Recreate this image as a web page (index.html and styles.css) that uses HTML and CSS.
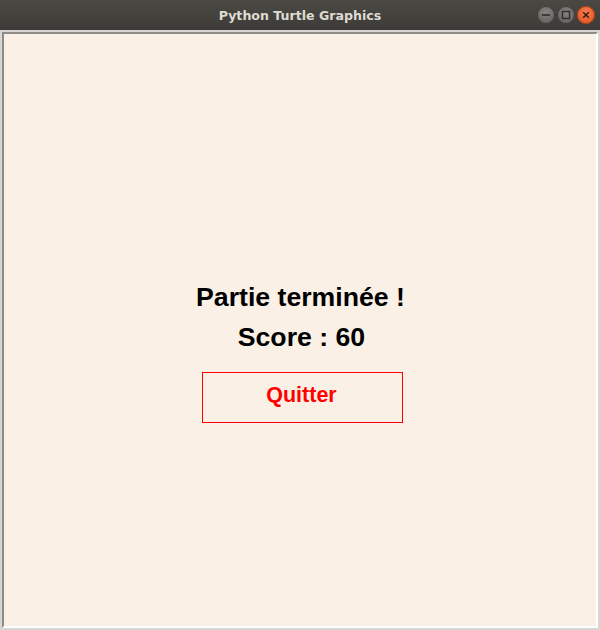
FILE: index.html
```html
<!DOCTYPE html>
<html lang="fr">
<head>
<meta charset="utf-8">
<title>Python Turtle Graphics</title>
<link rel="stylesheet" href="styles.css">
</head>
<body>
<div class="window">
  <header class="titlebar">
    <span class="title">Python Turtle Graphics</span>
    <div class="controls">
      <span class="ctl ctl-min"><svg width="18" height="18" viewBox="0 0 18 18"><line x1="5" y1="9" x2="13" y2="9" stroke="#2f2e2b" stroke-width="1.6"/></svg></span>
      <span class="ctl ctl-max"><svg width="18" height="18" viewBox="0 0 18 18"><rect x="5.5" y="5.5" width="7" height="7" fill="none" stroke="#2f2e2b" stroke-width="1.4"/></svg></span>
      <span class="ctl ctl-close"><svg width="18" height="18" viewBox="0 0 18 18"><path d="M6.2 6.2 L11.8 11.8 M11.8 6.2 L6.2 11.8" stroke="#3a1a0c" stroke-width="1.5"/></svg></span>
    </div>
  </header>
  <div class="frame">
    <main class="canvas">
      <div class="result">
        <h1 class="headline">Partie terminée !</h1>
        <p class="score">Score : 60</p>
        <div class="quit" role="button">Quitter</div>
      </div>
    </main>
  </div>
</div>
</body>
</html>
```
FILE: styles.css
```css
html, body {
  margin: 0;
  padding: 0;
}
body {
  width: 600px;
  height: 630px;
  overflow: hidden;
  background: #d8d6d3;
  font-family: "Liberation Sans", Arial, sans-serif;
}
.window {
  width: 600px;
  height: 630px;
  display: flex;
  flex-direction: column;
}
.titlebar {
  height: 30px;
  flex: 0 0 30px;
  background: linear-gradient(#4a4944, #3c3b37);
  display: flex;
  align-items: center;
  justify-content: center;
  position: relative;
}
.title {
  font-family: "DejaVu Sans", sans-serif;
  font-weight: bold;
  font-size: 12.6px;
  color: #dfdbd2;
}
.controls {
  position: absolute;
  right: 5px;
  top: 6px;
  display: flex;
  gap: 2px;
}
.ctl {
  width: 18px;
  height: 18px;
  border-radius: 50%;
  display: block;
}
.ctl svg { display: block; }
.ctl-min, .ctl-max {
  background: radial-gradient(circle at 50% 35%, #858480, #5a5955);
  box-shadow: inset 0 0 0 1px #3a3935;
}
.ctl-close {
  background: radial-gradient(circle at 50% 35%, #f47a4b, #e0521f);
  box-shadow: inset 0 0 0 1px #a63c14;
}
.frame {
  flex: 1;
  padding: 0 2px 2px 2px;
  border-top: 2px solid #d8d6d3;
  display: flex;
}
.canvas {
  flex: 1;
  background: #faf0e6;
  border-style: solid;
  border-width: 2px;
  border-color: #8f8b86 #ffffff #ffffff #8f8b86;
  display: flex;
  flex-direction: column;
  align-items: center;
  padding-top: 247px;
}
.result {
  display: flex;
  flex-direction: column;
  align-items: center;
  margin-left: 1px;
}
.headline {
  margin: 0;
  font-size: 26.67px;
  line-height: 32px;
  font-weight: bold;
  color: #000;
}
.score {
  margin: 8px 0 0 2px;
  font-size: 26.67px;
  line-height: 32px;
  font-weight: bold;
  color: #000;
}
.quit {
  box-sizing: border-box;
  margin-top: 19px;
  margin-left: 4px;
  width: 201px;
  height: 51px;
  border: 1px solid #ff0000;
  color: #ff0000;
  font-weight: bold;
  font-size: 21.5px;
  display: flex;
  align-items: center;
  justify-content: center;
  padding-bottom: 4px;
  padding-right: 2px;
}
```
